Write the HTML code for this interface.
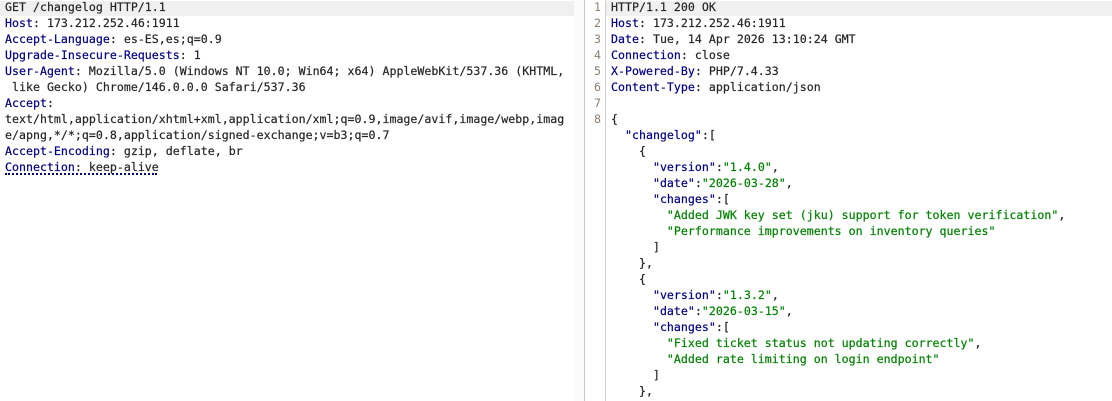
<!DOCTYPE html>
<html>
<head>
<meta charset="utf-8">
<style>
html,body{margin:0;padding:0;background:#fff}
body{width:1112px;height:401px;position:relative;overflow:hidden}
.l{position:absolute;margin-top:-1px;white-space:pre;font-family:"DejaVu Sans Mono","Liberation Mono",monospace;font-size:11.6px;letter-spacing:.01px;line-height:16px;height:16px;color:#262626;-webkit-text-stroke:.2px currentColor}
b{font-weight:normal;color:#000080}
i{font-style:normal;color:#008000}
.n{position:absolute;margin-top:-1px;left:586px;width:15px;text-align:right;font-family:"DejaVu Sans Mono","Liberation Mono",monospace;font-size:11.6px;line-height:16px;color:#8b7d70}
.box{position:absolute}
</style>
</head>
<body>
<div class="box" style="left:0;top:1px;width:574px;height:15px;background:#f0f0f0"></div>
<div class="box" style="left:574px;top:0;width:10px;height:401px;background:#fbfbfb"></div>
<div class="box" style="left:584px;top:0;width:1px;height:401px;background:#c8c8c8"></div>
<div class="box" style="left:605px;top:0;width:1px;height:401px;background:#d0d0d0"></div>
<div class="box" style="left:606px;top:1px;width:506px;height:15px;background:#f0f0f0"></div>
<div class="box" style="left:5px;top:173px;width:152px;height:0;border-top:2px dotted #000080"></div>

<div class="l" style="left:5px;top:0">GET /changelog HTTP/1.1</div>
<div class="l" style="left:5px;top:16px"><b>Host</b>: 173.212.252.46:1911</div>
<div class="l" style="left:5px;top:32px"><b>Accept-Language</b>: es-ES,es;q=0.9</div>
<div class="l" style="left:5px;top:48px"><b>Upgrade-Insecure-Requests</b>: 1</div>
<div class="l" style="left:5px;top:64px"><b>User-Agent</b>: Mozilla/5.0 (Windows NT 10.0; Win64; x64) AppleWebKit/537.36 (KHTML,</div>
<div class="l" style="left:5px;top:80px"> like Gecko) Chrome/146.0.0.0 Safari/537.36</div>
<div class="l" style="left:5px;top:96px"><b>Accept</b>:</div>
<div class="l" style="left:5px;top:112px">text/html,application/xhtml+xml,application/xml;q=0.9,image/avif,image/webp,imag</div>
<div class="l" style="left:5px;top:128px">e/apng,*/*;q=0.8,application/signed-exchange;v=b3;q=0.7</div>
<div class="l" style="left:5px;top:144px"><b>Accept-Encoding</b>: gzip, deflate, br</div>
<div class="l" style="left:5px;top:160px"><b>Connection</b>: keep-alive</div>

<div class="n" style="top:0">1</div>
<div class="n" style="top:16px">2</div>
<div class="n" style="top:32px">3</div>
<div class="n" style="top:48px">4</div>
<div class="n" style="top:64px">5</div>
<div class="n" style="top:80px">6</div>
<div class="n" style="top:96px">7</div>
<div class="n" style="top:112px">8</div>

<div class="l" style="left:611px;top:0">HTTP/1.1 200 OK</div>
<div class="l" style="left:611px;top:16px"><b>Host</b>: 173.212.252.46:1911</div>
<div class="l" style="left:611px;top:32px"><b>Date</b>: Tue, 14 Apr 2026 13:10:24 GMT</div>
<div class="l" style="left:611px;top:48px"><b>Connection</b>: close</div>
<div class="l" style="left:611px;top:64px"><b>X-Powered-By</b>: PHP/7.4.33</div>
<div class="l" style="left:611px;top:80px"><b>Content-Type</b>: application/json</div>
<div class="l" style="left:611px;top:112px">{</div>
<div class="l" style="left:611px;top:128px">  <b>"changelog"</b>:[</div>
<div class="l" style="left:611px;top:144px">    {</div>
<div class="l" style="left:611px;top:160px">      <b>"version"</b>:<i>"1.4.0"</i>,</div>
<div class="l" style="left:611px;top:176px">      <b>"date"</b>:<i>"2026-03-28"</i>,</div>
<div class="l" style="left:611px;top:192px">      <b>"changes"</b>:[</div>
<div class="l" style="left:611px;top:208px">        <i>"Added JWK key set (jku) support for token verification"</i>,</div>
<div class="l" style="left:611px;top:224px">        <i>"Performance improvements on inventory queries"</i></div>
<div class="l" style="left:611px;top:240px">      ]</div>
<div class="l" style="left:611px;top:256px">    },</div>
<div class="l" style="left:611px;top:272px">    {</div>
<div class="l" style="left:611px;top:288px">      <b>"version"</b>:<i>"1.3.2"</i>,</div>
<div class="l" style="left:611px;top:304px">      <b>"date"</b>:<i>"2026-03-15"</i>,</div>
<div class="l" style="left:611px;top:320px">      <b>"changes"</b>:[</div>
<div class="l" style="left:611px;top:336px">        <i>"Fixed ticket status not updating correctly"</i>,</div>
<div class="l" style="left:611px;top:352px">        <i>"Added rate limiting on login endpoint"</i></div>
<div class="l" style="left:611px;top:368px">      ]</div>
<div class="l" style="left:611px;top:384px">    },</div>
</body>
</html>
